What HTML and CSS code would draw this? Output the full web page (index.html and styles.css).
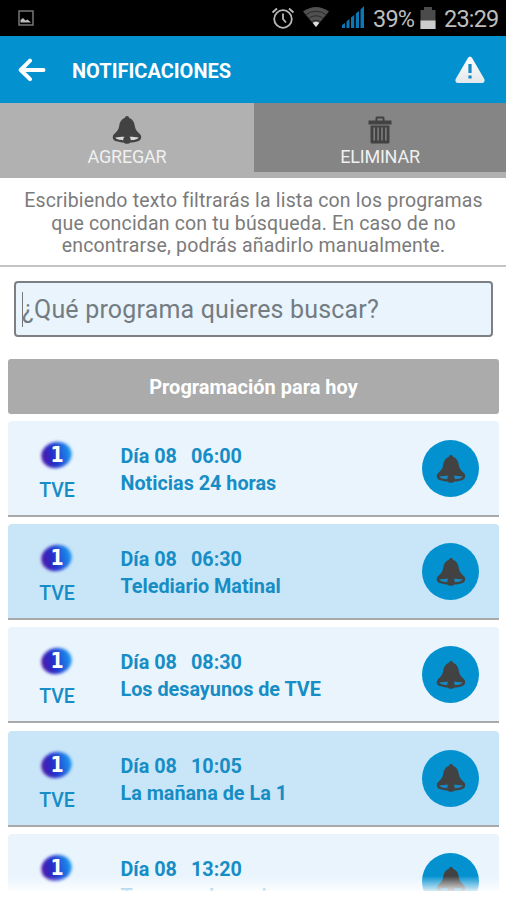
FILE: index.html
```html
<!DOCTYPE html>
<html lang="es">
<head>
<meta charset="utf-8">
<title>Notificaciones</title>
<link rel="stylesheet" href="styles.css">
</head>
<body>
<svg class="defs" aria-hidden="true">
  <defs>
    <symbol id="bell" viewBox="0 0 30 30">
      <path d="M15 1C16.200 1 17 1.800 17.200 3C21 4.200 22.300 7.500 22.800 11C23.400 15 25.500 16.800 28 19.300C30 21.500 29.500 24.800 26.500 26C23.500 27 20 27.500 18.500 27.500C17 29.300 13 29.300 11.500 27.500C10 27.500 6 26.900 3.500 26C.5 24.800 0 21.500 2 19.300C4.500 16.800 6.600 15 7.200 11C7.700 7.500 9 4.200 12.800 3C13 1.800 13.800 1 15 1Z" fill="#424242"/>
      <path d="M3.400 22.600C6 22 9 21.800 12.500 21.800C11.600 22.700 11.200 23.800 11.300 25.300C7 25 3.800 24.200 3.400 22.600ZM26.600 22.600C24 22 21 21.800 17.500 21.800C18.400 22.700 18.800 23.800 18.700 25.300C23 25 26.200 24.200 26.600 22.600Z"/>
    </symbol>
    <linearGradient id="logo" x1="0" x2="1"><stop offset="0" stop-color="#5018a8"/><stop offset=".4" stop-color="#2430cc"/><stop offset="1" stop-color="#1c9cf0"/></linearGradient>
    <linearGradient id="warn" x1="0" x2="0" y1="0" y2="1"><stop offset="0" stop-color="#fff"/><stop offset="1" stop-color="#e4e8ea"/></linearGradient>
    <filter id="soft" x="-30%" y="-30%" width="160%" height="160%"><feGaussianBlur stdDeviation="1.600"/></filter>
    <symbol id="tve" viewBox="0 0 38 32">
      <ellipse cx="18.500" cy="16" rx="15.300" ry="13" transform="rotate(-14 18.500 16)" fill="url(#logo)" filter="url(#soft)"/>
    </symbol>
  </defs>
</svg>
<div class="screen">
  <div class="status">
    <svg class="s-image" viewBox="0 0 16 16"><rect x="1" y="1" width="14" height="14" fill="none" stroke="#777" stroke-width="1.500"/><path d="M2.500 12.500V10L5 8L7.500 10.500L9.500 9.500L13 12.500Z" fill="#bbb"/></svg>
    <svg class="s-alarm" viewBox="0 0 24 24" fill="none" stroke="#b8b8b8" stroke-width="1.800"><circle cx="12" cy="13" r="8.800"/><path d="M12 7.500V13L15 16.500M1.500 6.500L6 2.500M22.500 6.500L18 2.500"/></svg>
    <svg class="s-wifi" viewBox="0 0 28 22"><path d="M1 5.500Q14-3.500 27 5.500L14 21Z" fill="#505050"/><path d="M3 9Q14 1.500 25 9M6 12.500Q14 7 22 12.500M9 16Q14 12.500 19 16" fill="none" stroke="#222" stroke-width=".8"/><path d="M10.800 17Q14 14.500 17.200 17L14 21Z" fill="#ddd"/></svg>
    <svg class="s-signal" viewBox="0 0 24 23" fill="#0b78b5"><path d="M1 22V19L4 17V22ZM5.500 22V15.500L8.500 13V22ZM10 22V11.500L13.200 9V22ZM14.800 22V7.500L18 5V22ZM19.500 22V3.500L23 0V22Z"/></svg>
    <span class="percent">39%</span>
    <svg class="s-battery" viewBox="0 0 16 24"><path d="M4 1H12V4H15.500V23H.5V4H4Z" fill="#4b4b4b"/><path d="M.5 14.500H15.500V23H.5Z" fill="#ccc"/></svg>
    <span class="clock">23:29</span>
  </div>
  <header class="bar">
    <svg class="back" viewBox="0 0 28 24" fill="none" stroke="#fff" stroke-width="4" stroke-linecap="round" stroke-linejoin="round"><path d="M12 2.700L2.700 12L12 21.200M3.500 12H25.500"/></svg>
    <h1>NOTIFICACIONES</h1>
    <svg class="warn" viewBox="0 0 30 28"><path d="M12.900 2Q15-1 17.100 2L29.300 23Q30.500 27 27 27H3Q-.5 27 .7 23Z" fill="url(#warn)"/><path d="M15 8V17M15 19.500V22.500" stroke="#1689c2" stroke-width="3.200"/></svg>
  </header>
  <nav class="tabs">
    <div class="tab"><svg class="tab-icon"><use href="#bell"/></svg><span>AGREGAR</span></div>
    <div class="tab remove"><svg class="tab-icon" viewBox="0 0 30 30"><path d="M3.500 5.500H10.500V3Q10.500 1.500 12 1.500H18Q19.500 1.500 19.500 3V5.500H26.500V9.500H3.500ZM12.500 3.500V5.500H17.500V3.500ZM5.500 10.500H24.500V27Q24.500 28.500 23 28.500H7Q5.500 28.500 5.500 27Z" fill="#424242" fill-rule="evenodd"/><path d="M9.200 12.500V25.500M13.100 12.500V25.500M17 12.500V25.500M20.900 12.500V25.500" stroke="#858585" stroke-width="1.400"/></svg><span>ELIMINAR</span></div>
  </nav>
  <p class="hint">Escribiendo texto filtrarás la lista con los programas<br>que concidan con tu búsqueda. En caso de no<br>encontrarse, podrás añadirlo manualmente.</p>
  <div class="search"><i class="caret"></i><span>¿Qué programa quieres buscar?</span></div>
  <h2>Programación para hoy</h2>
  <main class="list">
    <article class="card"><div class="channel"><div class="mark"><svg><use href="#tve"/></svg><b>1</b></div><span>TVE</span></div><div class="info"><p><span>Día 08</span><span>06:00</span></p><p>Noticias 24 horas</p></div><div class="alert"><svg><use href="#bell"/></svg></div></article>
    <article class="card alt"><div class="channel"><div class="mark"><svg><use href="#tve"/></svg><b>1</b></div><span>TVE</span></div><div class="info"><p><span>Día 08</span><span>06:30</span></p><p>Telediario Matinal</p></div><div class="alert"><svg><use href="#bell"/></svg></div></article>
    <article class="card"><div class="channel"><div class="mark"><svg><use href="#tve"/></svg><b>1</b></div><span>TVE</span></div><div class="info"><p><span>Día 08</span><span>08:30</span></p><p>Los desayunos de TVE</p></div><div class="alert"><svg><use href="#bell"/></svg></div></article>
    <article class="card alt"><div class="channel"><div class="mark"><svg><use href="#tve"/></svg><b>1</b></div><span>TVE</span></div><div class="info"><p><span>Día 08</span><span>10:05</span></p><p>La mañana de La 1</p></div><div class="alert"><svg><use href="#bell"/></svg></div></article>
    <article class="card"><div class="channel"><div class="mark"><svg><use href="#tve"/></svg><b>1</b></div></div><div class="info"><p><span>Día 08</span><span>13:20</span></p><p>Torres en la cocina</p></div><div class="alert"><svg><use href="#bell"/></svg></div></article>
  </main>
</div>
</body>
</html>
```
FILE: styles.css
```css
* { box-sizing: border-box; }
body { margin: 0; background: #fff; font-family: Roboto, "Liberation Sans", sans-serif; }
h1, h2, p { margin: 0; }
svg { display: block; flex: none; }
.defs { position: absolute; width: 0; height: 0; }
.screen { width: 506px; height: 900px; overflow: hidden; display: flex; flex-direction: column; }
.screen > * { flex: none; }

.status { height: 36px; background: #000; display: flex; align-items: center; padding-left: 18px; color: #bdbdbd; font-size: 23.500px; line-height: 36px; white-space: nowrap; }
.s-image { width: 16px; height: 16px; }
.s-alarm { width: 24px; height: 24px; margin-left: 237px; }
.s-wifi { width: 28px; height: 22px; margin: -3px 0 0 7px; }
.s-signal { width: 24px; height: 23px; margin: -1px 0 0 11px; }
.percent { width: 41px; margin: 2px 0 0 8px; letter-spacing: -.800px; }
.s-battery { width: 16px; height: 24px; margin: -1px 0 0 6px; }
.clock { margin: 2px 0 0 8px; letter-spacing: -.800px; }

.bar { height: 67px; background: #0391d0; display: flex; align-items: center; padding: 0 21px 0 18px; }
.back { width: 28px; height: 24px; margin-top: 1px; }
h1 { color: #fff; font-size: 20px; font-weight: 700; margin: 2px auto 0 26px; line-height: 24px; }
.warn { width: 30px; height: 28px; }

.tabs { height: 75px; background: #b1b1b1; display: flex; }
.tab { width: 254px; display: flex; flex-direction: column; align-items: center; padding-top: 12px; color: #f0f0f0; font-size: 18px; line-height: 20px; letter-spacing: -.200px; }
.tab span { margin-top: 2px; }
.tab-icon { width: 30px; height: 30px; fill: #d8d8d8; }
.remove { width: 252px; height: 69px; background: #858585; }

.hint { height: 89px; border-bottom: 2px solid #c4c4c4; padding: 12px 0 0 1px; text-align: center; color: #7b7b7b; font-size: 19.500px; letter-spacing: .170px; line-height: 22.500px; white-space: nowrap; }

.search { height: 56px; margin: 14px 13px 0 14px; border: 2px solid #7c8084; border-radius: 4px; background: #e9f4fd; display: flex; align-items: center; padding-left: 6px; color: #747c82; font-size: 25px; letter-spacing: .180px; }
.caret { width: 1px; height: 35px; background: #777; margin-right: -1px; }

h2 { height: 55px; margin: 22px 7px 0 8px; padding-top: 1px; border-radius: 3px; background: #ababab; color: #fff; display: flex; align-items: center; justify-content: center; font-size: 20px; }

.list { height: 470px; margin: 7px 7px 0 8px; overflow: hidden; position: relative; }
.list::after { content: ""; position: absolute; inset: 455px 0 auto; height: 24px; background: linear-gradient(rgba(255,255,255,0), #fff 75%); }
.card { height: 96px; margin-bottom: 7.200px; border-radius: 4px 4px 0 0; border-bottom: 2px solid #a9a9a9; background: #e9f4fd; display: flex; color: #168dc5; }
.alt { background: #c9e5f8; }
.channel { width: 98px; display: flex; flex-direction: column; align-items: center; padding-top: 18px; font-size: 19.500px; font-weight: 500; line-height: 22px; }
.channel > span { margin-top: 9px; }
.mark { width: 38px; height: 32px; position: relative; }
.mark svg { width: 38px; height: 32px; }
.mark b { position: absolute; inset: 4px 0 auto; text-align: center; color: #fff; font: 700 21px/24px "DejaVu Sans Condensed", "DejaVu Sans", sans-serif; }
.info { flex: 1; padding: 22px 0 0 14.500px; font-size: 19.800px; line-height: 27px; font-weight: 700; }
.info p:first-child { display: flex; gap: 14px; }
.alert { width: 57px; height: 57px; border-radius: 50%; background: #0391d0; margin: 19px 20px 0 0; display: grid; place-items: center; }
.alert svg { width: 30px; height: 30px; fill: #1689c2; }
```
